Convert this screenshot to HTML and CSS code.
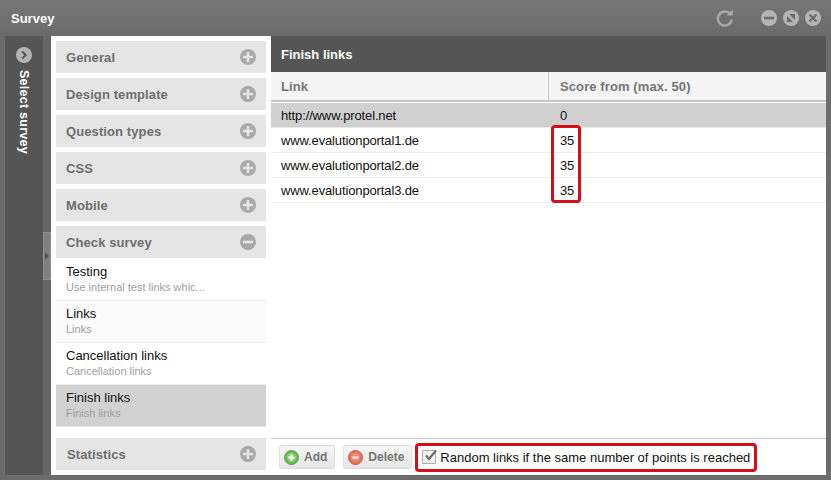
FILE: index.html
```html
<!DOCTYPE html>
<html>
<head>
<meta charset="utf-8">
<title>Survey</title>
<link rel="stylesheet" href="styles.css">
</head>
<body>
<div class="window">
  <header class="titlebar">
    <span class="title">Survey</span>
    <svg class="refresh" width="18" height="18" viewBox="0 0 18 18"><path d="M14.2 5A7 7 0 1 0 15.8 10.5" fill="none" stroke="#a8a8a8" stroke-width="2.4"/><path d="M10.6 6.6H16.8V0.6Z" fill="#a8a8a8"/></svg>
    <div class="winbtns">
      <svg width="16" height="16" viewBox="0 0 16 16"><circle cx="8" cy="8" r="8" fill="#b4b4b4"/><rect x="3" y="6.7" width="10" height="2.6" fill="#6b6b6b"/></svg>
      <svg width="16" height="16" viewBox="0 0 16 16"><circle cx="8" cy="8" r="8" fill="#b4b4b4"/><rect x="4" y="4" width="8" height="8" fill="#6b6b6b"/><path d="M2.5 4.5L4.5 2.5L13.5 11.5L11.5 13.5Z" fill="#b4b4b4"/></svg>
      <svg width="16" height="16" viewBox="0 0 16 16"><circle cx="8" cy="8" r="8" fill="#b4b4b4"/><path d="M4.5 4.5L11.5 11.5M11.5 4.5L4.5 11.5" stroke="#6b6b6b" stroke-width="2.2"/></svg>
    </div>
  </header>
  <div class="body">
    <aside class="strip">
      <svg class="strip-icon" width="16" height="16" viewBox="0 0 16 16"><circle cx="8" cy="8" r="8" fill="#b4b4b4"/><path d="M6.2 4.5L9.7 8L6.2 11.5" fill="none" stroke="#555" stroke-width="2"/></svg>
      <span class="strip-label">Select survey</span>
    </aside>
    <div class="gutter">
      <div class="handle"><span class="handle-arrow"></span></div>
    </div>
    <div class="content">
      <nav class="nav">
        <div class="acc"><span>General</span><svg class="pm" viewBox="0 0 16 16"><circle cx="8" cy="8" r="8" fill="#a9a9a9"/><path d="M3 8H13M8 3V13" stroke="#e5e5e5" stroke-width="2.6"/></svg></div>
        <div class="acc"><span>Design template</span><svg class="pm" viewBox="0 0 16 16"><circle cx="8" cy="8" r="8" fill="#a9a9a9"/><path d="M3 8H13M8 3V13" stroke="#e5e5e5" stroke-width="2.6"/></svg></div>
        <div class="acc"><span>Question types</span><svg class="pm" viewBox="0 0 16 16"><circle cx="8" cy="8" r="8" fill="#a9a9a9"/><path d="M3 8H13M8 3V13" stroke="#e5e5e5" stroke-width="2.6"/></svg></div>
        <div class="acc"><span>CSS</span><svg class="pm" viewBox="0 0 16 16"><circle cx="8" cy="8" r="8" fill="#a9a9a9"/><path d="M3 8H13M8 3V13" stroke="#e5e5e5" stroke-width="2.6"/></svg></div>
        <div class="acc"><span>Mobile</span><svg class="pm" viewBox="0 0 16 16"><circle cx="8" cy="8" r="8" fill="#a9a9a9"/><path d="M3 8H13M8 3V13" stroke="#e5e5e5" stroke-width="2.6"/></svg></div>
        <div class="acc open"><span>Check survey</span><svg class="pm" viewBox="0 0 16 16"><circle cx="8" cy="8" r="8" fill="#a9a9a9"/><path d="M3 8H13" stroke="#e5e5e5" stroke-width="2.6"/></svg></div>
        <div class="sub first"><div class="sub-t">Testing</div><div class="sub-d">Use internal test links whic...</div></div>
        <div class="sub alt"><div class="sub-t">Links</div><div class="sub-d">Links</div></div>
        <div class="sub"><div class="sub-t">Cancellation links</div><div class="sub-d">Cancellation links</div></div>
        <div class="sub active"><div class="sub-t">Finish links</div><div class="sub-d">Finish links</div></div>
        <div class="acc last"><span>Statistics</span><svg class="pm" viewBox="0 0 16 16"><circle cx="8" cy="8" r="8" fill="#a9a9a9"/><path d="M3 8H13M8 3V13" stroke="#e5e5e5" stroke-width="2.6"/></svg></div>
      </nav>
      <main class="main">
        <div class="main-head">Finish links</div>
        <div class="thead"><div class="c1">Link</div><div class="c2">Score from (max. 50)</div></div>
        <div class="rows">
          <div class="row sel"><div class="c1">http://www.protel.net</div><div class="c2">0</div></div>
          <div class="row"><div class="c1">www.evalutionportal1.de</div><div class="c2">35</div></div>
          <div class="row"><div class="c1">www.evalutionportal2.de</div><div class="c2">35</div></div>
          <div class="row"><div class="c1">www.evalutionportal3.de</div><div class="c2">35</div></div>
          <div class="redbox"></div>
        </div>
        <div class="toolbar">
          <button class="btn"><svg width="15" height="15" viewBox="0 0 15 15"><circle cx="7.5" cy="7.5" r="7" fill="#6cb85a" stroke="#58a048"/><circle cx="7.5" cy="7.5" r="4.6" fill="#8ed07a"/><path d="M4.5 7.5H10.5M7.5 4.5V10.5" stroke="#fff" stroke-width="2"/></svg>Add</button>
          <button class="btn"><svg width="15" height="15" viewBox="0 0 15 15"><circle cx="7.5" cy="7.5" r="7" fill="#e8705c" stroke="#d05a48"/><circle cx="7.5" cy="7.5" r="4.6" fill="#ee8a78"/><path d="M4.5 7.5H10.5" stroke="#fff" stroke-width="2"/></svg>Delete</button>
          <label class="random">
            <span class="check"><svg width="15" height="14" viewBox="0 0 15 14"><path d="M3 6.5L6 10L13 1.5" fill="none" stroke="#6a6a6a" stroke-width="2.2"/></svg></span>
            <span class="random-text">Random links if the same number of points is reached</span>
          </label>
        </div>
      </main>
    </div>
  </div>
</div>
</body>
</html>
```
FILE: styles.css
```css
* { box-sizing: border-box; }
html, body { margin: 0; height: 100%; }
body { background: #fff; font-family: "Liberation Sans", Arial, sans-serif; font-size: 12px; overflow: hidden; }
.window { width: 831px; height: 480px; background: #6c6c6c; border-radius: 5px 5px 0 0; display: flex; flex-direction: column; padding: 0 5px 5px; }
.titlebar { height: 36px; flex: none; display: flex; align-items: center; margin: 0 -5px; padding: 0 10px 0 11px; background: linear-gradient(#777, #6a6a6a); }
.title { font-weight: bold; font-size: 13px; color: #fff; flex: 1; }
.refresh { margin-right: 27px; }
.winbtns { display: flex; gap: 6px; }
.body { flex: 1; display: flex; min-height: 0; }
.strip { width: 38px; flex: none; background: #555; display: flex; flex-direction: column; align-items: center; padding-top: 11px; }
.strip-label { writing-mode: vertical-rl; font-weight: bold; font-size: 12.5px; color: #fff; margin-top: 7px; letter-spacing: 0.25px; }
.gutter { width: 8px; flex: none; background: #666; display: flex; align-items: center; position: relative; }
.handle { position: absolute; left: 0; top: 196px; width: 8px; height: 48px; background: #808080; border: 1px solid #8e8e8e; display: flex; align-items: center; justify-content: center; }
.handle-arrow { width: 0; height: 0; border-left: 4px solid #555; border-top: 4px solid transparent; border-bottom: 4px solid transparent; }
.content { flex: 1; display: flex; min-width: 0; background: #fff; }
.nav { width: 220px; flex: none; margin-top: 2px; padding: 3px 5px 5px; background: #fff; display: flex; flex-direction: column; }
.acc { height: 32px; flex: none; background: #e5e5e5; margin-bottom: 5px; display: flex; align-items: center; justify-content: space-between; padding: 0 10px; font-weight: bold; font-size: 13px; letter-spacing: 0.1px; color: #6e6e6e; }
.acc.open { margin-bottom: 0; }
.acc.last { margin-top: 11px; margin-bottom: 0; }
.acc.last span { margin-left: 1px; }
.pm { width: 16px; height: 16px; }
.sub { height: 42px; flex: none; border-bottom: 1px solid #ececec; padding: 5px 10px 0; background: #fff; }
.sub.first { height: 43px; padding-top: 6px; }
.sub.alt { background: #fafafa; }
.sub.active { background: #d2d2d2; border-bottom-color: #e8e8e8; }
.sub-t { font-size: 13px; line-height: 15px; color: #111; }
.sub-d { font-size: 11px; line-height: 13px; color: #a0a0a0; margin-top: 2px; }
.main { flex: 1; display: flex; flex-direction: column; min-width: 0; }
.main-head { height: 36px; flex: none; background: #555; color: #fff; font-weight: bold; font-size: 13px; display: flex; align-items: center; padding-left: 10px; }
.thead { height: 30px; flex: none; display: flex; background: #f4f4f4; border-bottom: 2px solid #c8c8c8; font-weight: bold; font-size: 13px; letter-spacing: 0.1px; color: #757575; }
.thead .c1 { border-right: 1px solid #c8c8c8; line-height: 29px; }
.thead .c2 { line-height: 29px; }
.c1 { width: 278px; flex: none; padding-left: 10px; }
.c2 { flex: 1; padding-left: 11px; }
.rows { flex: 1; position: relative; padding-top: 1px; background: #fff; }
.row { height: 25px; display: flex; align-items: center; border-bottom: 1px solid #ececec; font-size: 13px; letter-spacing: -0.13px; color: #111; }
.row.sel { background: #d0d0d0; border-bottom-color: #e8e8e8; }
.redbox { position: absolute; left: 280px; top: 23px; width: 30px; height: 78px; border: 3px solid #d40f1c; border-radius: 4px; }
.toolbar { height: 37px; flex: none; display: flex; align-items: center; border-top: 1px solid #c8c8c8; padding: 0 0 0 8px; background: #fff; }
.btn { height: 24px; display: flex; align-items: center; gap: 5px; padding: 0 7px 0 4px; margin: 0 8px 0 0; background: linear-gradient(#f6f6f6, #e6e6e6); border: 1px solid #dcdcdc; border-radius: 3px; font: bold 12px "Liberation Sans", Arial, sans-serif; color: #757575; }
.random { height: 29px; display: flex; align-items: center; gap: 4px; border: 3px solid #d40f1c; border-radius: 4px; padding: 0 4px; margin-left: -5px; font-size: 13px; color: #111; }
.check { width: 14px; height: 14px; border: 1px solid #aaa; background: #f2f2f2; border-radius: 1px; display: flex; }
.check svg { flex: none; margin-top: -2px; }
```
